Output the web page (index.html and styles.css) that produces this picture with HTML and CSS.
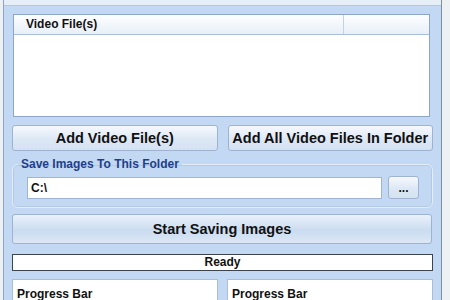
FILE: index.html
```html
<!DOCTYPE html>
<html lang="en">
<head>
    <meta charset="UTF-8">
    <title>Save Images From Video</title>
    <link rel="stylesheet" href="styles.css">
</head>
<body>
    <div class="window">
        <div class="title-strip"></div>
        <div class="content">
            <div class="file-list">
                <div class="list-header">
                    <div class="col col-main">Video File(s)</div>
                    <div class="col col-extra"></div>
                </div>
                <div class="list-body"></div>
            </div>

            <div class="button-row">
                <button class="btn">Add Video File(s)</button>
                <button class="btn">Add All Video Files In Folder</button>
            </div>

            <fieldset class="group">
                <legend>Save Images To This Folder</legend>
                <div class="folder-row">
                    <input type="text" class="folder-input" value="C:\">
                    <button class="btn btn-browse">...</button>
                </div>
            </fieldset>

            <button class="btn btn-start">Start Saving Images</button>

            <div class="status">Ready</div>

            <div class="progress-row">
                <div class="progress-box">Progress Bar</div>
                <div class="progress-box">Progress Bar</div>
            </div>
        </div>
    </div>
</body>
</html>
```

FILE: styles.css
```css
* {
    margin: 0;
    padding: 0;
    box-sizing: border-box;
}

body {
    font-family: "Liberation Sans", Arial, sans-serif;
    background-color: #eef1f4;
    color: #111;
    height: 300px;
    overflow: hidden;
}

.window {
    width: 439px;
    height: 300px;
    margin-left: 3px;
    overflow: hidden;
    background-color: #c3d9f3;
    border-left: 1px solid #8ea6c6;
    border-right: 1px solid #7d8ea5;
}

.title-strip {
    height: 6px;
    background-color: #e6eef8;
    border-bottom: 1px solid #b4c8e1;
}

.content {
    padding: 8px 8px 0 8px;
}

/* File list */
.file-list {
    height: 103px;
    margin-left: 1px;
    margin-right: 3px;
    background-color: #fff;
    border: 1px solid #8ea6c6;
}

.list-header {
    display: flex;
    height: 20px;
    background: linear-gradient(#fdfeff, #e8eff8);
    border-bottom: 1px solid #a8bedb;
}

.col {
    font-size: 12px;
    font-weight: bold;
    line-height: 19px;
}

.col-main {
    width: 330px;
    padding-left: 12px;
    border-right: 1px solid #c4d2e4;
}

.col-extra {
    flex: 1;
}

/* Buttons */
.btn {
    font-family: "Liberation Sans", Arial, sans-serif;
    font-weight: bold;
    color: #111;
    background: linear-gradient(#f6f9fd, #dde8f5 55%, #d3e1f2);
    border: 1px solid #9db3cf;
    border-radius: 3px;
}

.button-row {
    display: flex;
    gap: 10px;
    margin-top: 8px;
}

.button-row .btn {
    flex: 1;
    height: 26px;
    font-size: 14.5px;
}

/* Folder group */
.group {
    height: 51px;
    margin-top: 6px;
    padding: 5px 13px 0 14px;
    border: 1px solid #e3ecf7;
    border-radius: 6px;
    box-shadow: inset 0 0 0 1px #b3c8e2;
}

.group legend {
    margin-left: -9px;
    padding: 0 3px;
    font-size: 12px;
    font-weight: bold;
    color: #1f3f8a;
}

.folder-row {
    display: flex;
    align-items: center;
    gap: 6px;
}

.folder-input {
    width: 355px;
    height: 22px;
    padding-left: 3px;
    font-family: "Liberation Sans", Arial, sans-serif;
    font-size: 12px;
    font-weight: bold;
    color: #111;
    background-color: #fff;
    border: 1px solid #9fb5d2;
}

.btn-browse {
    width: 31px;
    height: 23px;
    font-size: 12px;
}

.btn-start {
    display: block;
    width: 420px;
    height: 30px;
    margin-top: 6px;
    font-size: 14.5px;
    background: linear-gradient(#eaf1fa, #cbdcf0 55%, #dbe7f5);
}

/* Status and progress */
.status {
    height: 17px;
    margin-top: 10px;
    font-size: 12px;
    font-weight: bold;
    line-height: 15px;
    text-align: center;
    background-color: #fff;
    border: 1px solid #3c4450;
}

.progress-row {
    display: flex;
    gap: 9px;
    margin-top: 8px;
}

.progress-box {
    flex: 1;
    height: 40px;
    padding: 7px 0 0 4px;
    font-size: 12px;
    font-weight: bold;
    background-color: #fff;
    border: 1px solid #a9bedb;
}
```
